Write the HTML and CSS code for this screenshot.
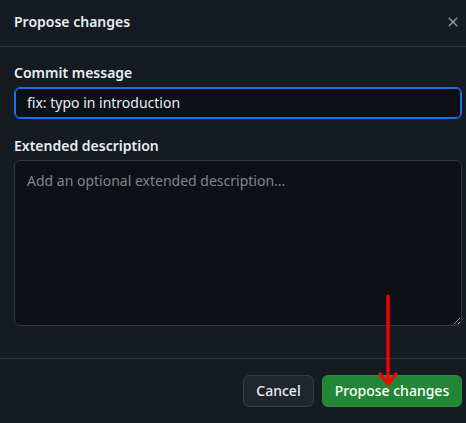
FILE: index.html
```
<!DOCTYPE html>
<html>
<head>
<meta charset="utf-8">
<link rel="stylesheet" href="styles.css">
</head>
<body>
<div class="dialog">
  <div class="header">
    <h1 class="title">Propose changes</h1>
    <button class="close" aria-label="Close">
      <svg width="16" height="16" viewBox="0 0 16 16"><path fill="currentColor" d="M3.72 3.72a.75.75 0 0 1 1.06 0L8 6.94l3.22-3.220a.749.749 0 0 1 1.275.326.749.749 0 0 1-.215.734L9.06 8l3.22 3.22a.749.749 0 0 1-.326 1.275.749.749 0 0 1-.734-.215L8 9.06l-3.22 3.22a.751.751 0 0 1-1.042-.018.751.751 0 0 1-.018-1.042L6.94 8 3.720 4.78a.75.75 0 0 1 0-1.06Z"/></svg>
    </button>
  </div>
  <div class="body">
    <label class="label">Commit message</label>
    <div class="input">fix: typo in introduction</div>
    <label class="label second">Extended description</label>
    <textarea class="textarea" placeholder="Add an optional extended description..."></textarea>
  </div>
  <div class="footer">
    <button class="btn cancel">Cancel</button>
    <button class="btn primary">Propose changes</button>
  </div>
  <svg class="arrow" width="30" height="100" viewBox="0 0 30 100">
    <line x1="15" y1="3" x2="15" y2="88" stroke="#ff0000" stroke-width="3.2" stroke-linecap="round"/>
    <polyline points="7,81 15,91 23,81" fill="none" stroke="#ff0000" stroke-width="3.2" stroke-linecap="round" stroke-linejoin="round"/>
  </svg>
</div>
</body>
</html>
```
FILE: styles.css
```
* { box-sizing: border-box; }
html, body { margin: 0; padding: 0; background: #161b22; }
body {
  font-family: "Noto Sans", "Open Sans", sans-serif;
  color: #e6edf3;
  width: 466px;
  height: 423px;
  overflow: hidden;
}
.dialog {
  position: relative;
  width: 466px;
  height: 423px;
  background: #161b22;
}
.header {
  height: 47px;
  display: flex;
  align-items: center;
  justify-content: space-between;
  padding: 0 5px 0 14px;
  border-bottom: 1px solid #30363d;
}
.title {
  margin: 0;
  font-size: 14px;
  font-weight: 600;
  line-height: 20px;
  padding-bottom: 2px;
}
.close {
  width: 16px;
  height: 16px;
  padding: 0;
  border: 0;
  background: none;
  color: #9198a1;
  display: flex;
  margin-bottom: 2px;
}
.body {
  display: flex;
  flex-direction: column;
  padding: 16px 4px 32px 14px;
}
.label {
  font-size: 14px;
  font-weight: 600;
  line-height: 20px;
  margin-bottom: 4px;
}
.label.second { margin-top: 17px; }
.input {
  height: 32px;
  border: 1px solid #1f6feb;
  box-shadow: inset 0 0 0 1px #1f6feb;
  border-radius: 6px;
  background: #0d1117;
  padding: 0 12px;
  font-size: 14px;
  line-height: 30px;
  color: #e6edf3;
}
.textarea {
  height: 166px;
  border: 1px solid #30363d;
  border-radius: 6px;
  background: #0d1117;
  padding: 10px 12px;
  font-family: "Noto Sans", "Open Sans", sans-serif;
  font-size: 14px;
  line-height: 20px;
  color: #e6edf3;
  resize: vertical;
  outline: none;
  color-scheme: dark;
}
.textarea::placeholder { color: #7d8590; }
.footer {
  border-top: 1px solid #30363d;
  padding: 16px 4px 0 14px;
  display: flex;
  justify-content: flex-end;
  gap: 8px;
}
.btn {
  height: 32px;
  border-radius: 6px;
  font-family: "Noto Sans", "Open Sans", sans-serif;
  font-size: 14px;
  font-weight: 500;
  padding: 0;
  line-height: 30px;
  white-space: nowrap;
  text-align: center;
}
.cancel {
  width: 71px;
  background: #21262d;
  border: 1px solid #363b42;
  color: #e6edf3;
}
.primary {
  width: 140px;
  background: #238636;
  border: 1px solid #2a8f3d;
  color: #ffffff;
}
.arrow {
  position: absolute;
  left: 373px;
  top: 293px;
}
```
